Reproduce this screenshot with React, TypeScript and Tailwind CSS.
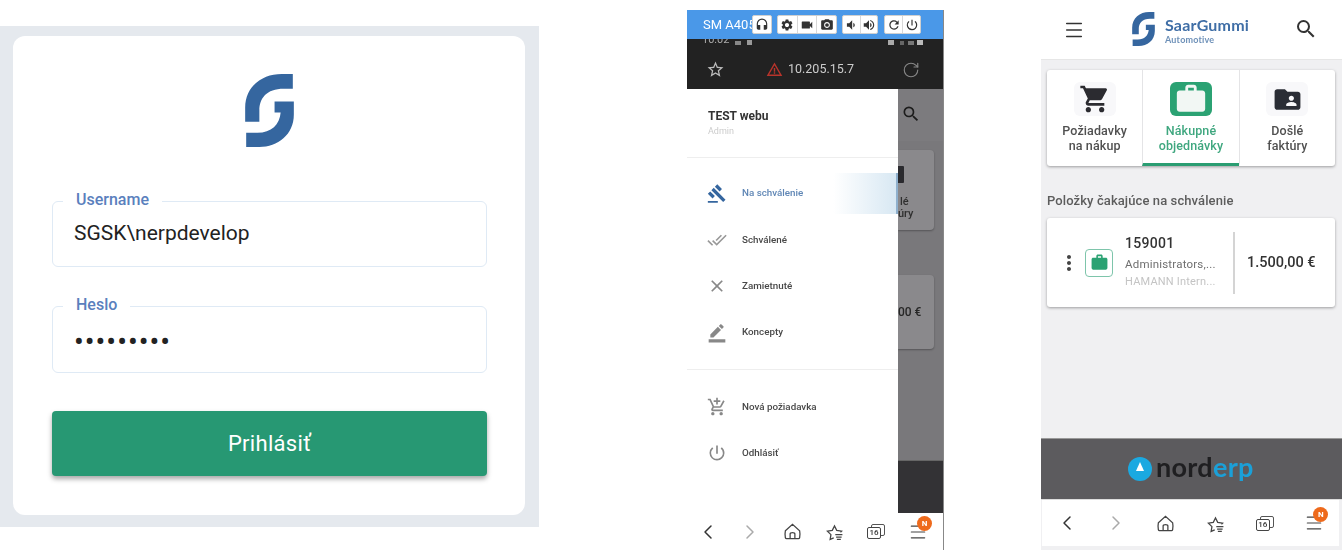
import type { ReactNode } from 'react'
import { clsx } from 'clsx'
import {
  MdAddShoppingCart,
  MdBorderColor,
  MdClose,
  MdDoneAll,
  MdFolderShared,
  MdGavel,
  MdHeadset,
  MdMoreVert,
  MdPhotoCamera,
  MdPowerSettingsNew,
  MdRefresh,
  MdSearch,
  MdSettings,
  MdShoppingCart,
  MdStarBorder,
  MdVideocam,
  MdVolumeDown,
  MdVolumeUp,
  MdWarningAmber,
  MdWork,
} from 'react-icons/md'
import { ChevronLeft, ChevronRight, Menu, RotateCw } from 'lucide-react'

function SaarLogo({ className }: { className: string }) {
  return (
    <svg viewBox="0 0 48 72" className={className} fill="#35669f">
      <path d="M47 0V14.5H38C21 14.5 14 24 14 36V47H0V33C0 13 16 0 36 0Z" />
      <path d="M29 27H48V40C48 60 32 72 14 72H1V58H12C26 58 34 50 35 38H29Z" />
    </svg>
  )
}

function Field({ label, gapWidth, children, className }: { label: string; gapWidth: string; children: ReactNode; className: string }) {
  return (
    <div className={clsx('relative ml-[39px] mr-[38px] border-[1.5px] border-[#dfeaf5] rounded-md flex items-center pl-[21px] text-[#222]', className)}>
      <span className={clsx('absolute left-[10px] -top-[12px] h-5 bg-white pl-[13px] text-[16px] font-medium leading-5 text-[#5a80bd]', gapWidth)}>{label}</span>
      {children}
    </div>
  )
}

function LoginCard() {
  return (
    <section className="mt-[26px] w-[539px] h-[501px] shrink-0 bg-[#e5e9ee] pt-[10px] pl-[13px]">
      <div className="w-[512px] h-[479px] bg-white rounded-xl flex flex-col">
        <SaarLogo className="w-[49px] h-[73px] mt-[38px] ml-[232px]" />
        <Field label="Username" gapWidth="w-[99px]" className="mt-[54px] h-[66px] text-[21px]">
          SGSK\nerpdevelop
        </Field>
        <Field label="Heslo" gapWidth="w-[67px]" className="mt-[39px] h-[67px]">
          <span className="text-[29px] leading-[28px] tracking-[1px] pt-[4px]">•••••••••</span>
        </Field>
        <button className="ml-[39px] mr-[38px] mt-[38px] h-[65px] rounded-sm bg-[#279873] text-white text-[22px] tracking-[0.3px] shadow-[0_3px_5px_rgba(0,0,0,0.35)]">
          Prihlásiť
        </button>
      </div>
    </section>
  )
}

function ToolGroup({ items, className }: { items: ReactNode[]; className: string }) {
  return (
    <div className={clsx('flex h-[19px] bg-white rounded-[2px] border border-[#d0d0d0]', className)}>
      {items.map((item, i) => (
        <span key={i} className="flex-1 flex items-center justify-center border-l border-[#d8d8d8] first:border-l-0 text-[#333] text-[14px]">
          {item}
        </span>
      ))}
    </div>
  )
}

function HomeIcon() {
  return (
    <svg viewBox="0 0 24 24" className="w-[19px] h-[19px]" fill="none" stroke="#444" strokeWidth="1.6">
      <path d="M3 11 12 3l9 8c.6 3 .6 6 0 9a1.500 1.500 0 0 1-1.500 1h-15A1.500 1.500 0 0 1 3 20c-.6-3-.6-6 0-9Z" />
      <path d="M9 21v-6c0-2 6-2 6 0v6" />
    </svg>
  )
}

function StarListIcon() {
  return (
    <svg viewBox="0 0 24 24" className="w-[19px] h-[19px]" fill="none" stroke="#444" strokeWidth="1.6">
      <path d="M11 20 6.500 22l1-6L3 11.500l6.200-1L12 5l2.800 5.500 6.200 1-1.500 1.500" />
      <path d="M13 16h9M14 19h7M15 22h5" />
    </svg>
  )
}

function TabsIcon() {
  return (
    <div className="relative w-[18px] h-[15px]">
      <span className="absolute right-0 top-0 w-[14px] h-[12px] border-[1.5px] border-[#555] rounded-[2px]" />
      <span className="absolute left-0 bottom-0 w-[14px] h-[12px] border-[1.5px] border-[#444] rounded-[2px] bg-white text-[8px] leading-[9px] text-center font-medium text-[#333]">16</span>
    </div>
  )
}

function BrowserNav({ className }: { className: string }) {
  return (
    <nav className={clsx('grid grid-cols-6 items-center justify-items-center bg-white', className)}>
      <ChevronLeft size={24} strokeWidth={1.5} className="text-[#333]" />
      <ChevronRight size={24} strokeWidth={1.5} className="text-[#aaa]" />
      <HomeIcon />
      <StarListIcon />
      <TabsIcon />
      <div className="relative">
        <Menu size={20} strokeWidth={1.4} className="block text-[#444]" />
        <span className="absolute -top-[6px] left-[9px] w-[15px] h-[15px] rounded-full bg-[#ee6a1c] text-white text-[8px] font-bold leading-[15px] text-center">N</span>
      </div>
    </nav>
  )
}

const DRAWER_ITEMS = [
  { label: 'Schválené', icon: <MdDoneAll size={20} className="text-[#999]" /> },
  { label: 'Zamietnuté', icon: <MdClose size={20} className="text-[#888]" /> },
  { label: 'Koncepty', icon: <MdBorderColor size={21} className="text-[#888]" /> },
]

function DrawerRow({ icon, label }: { icon: ReactNode; label: string }) {
  return (
    <div className="h-[46px] flex items-center">
      <span className="w-[20px] ml-[20px] mr-[15px] flex justify-center">{icon}</span>
      <span className="text-[9.8px] font-medium text-[#484848]">{label}</span>
    </div>
  )
}

function MiddlePhone() {
  return (
    <section className="ml-[148px] mt-[10px] w-[257px] h-[540px] shrink-0 flex flex-col border-r border-r-[#888] blur-[0.4px]">
      <div className="h-[29px] bg-[#4a98e8] flex items-center shrink-0 overflow-hidden">
        <span className="ml-[16px] w-[49px] whitespace-nowrap overflow-hidden text-white text-[13px]">SM A405</span>
        <ToolGroup className="w-[20px]" items={[<MdHeadset key="h" />]} />
        <ToolGroup className="w-[60px] ml-[5px]" items={[<MdSettings key="s" />, <MdVideocam key="v" />, <MdPhotoCamera key="p" />]} />
        <ToolGroup className="w-[36px] ml-[5px]" items={[<MdVolumeDown key="d" />, <MdVolumeUp key="u" />]} />
        <ToolGroup className="w-[37px] ml-[6px]" items={[<MdRefresh key="r" />, <MdPowerSettingsNew key="o" />]} />
      </div>

      <div className="h-[50px] bg-[#222] shrink-0 flex flex-col overflow-hidden">
        <div className="h-[6px] pl-[15px] flex items-end pr-[20px] overflow-hidden">
          <span className="text-[11px] leading-[10px] text-[#aaa]">10:02</span>
          <span className="ml-[6px] w-[6px] h-[4px] bg-[#888]" />
          <span className="ml-[6px] w-[5px] h-[5px] bg-[#999]" />
          <span className="ml-auto w-[6px] h-[5px] bg-[#aaa]" />
          <span className="ml-[6px] w-[4px] h-[4px] bg-[#666]" />
          <span className="ml-[4px] w-[6px] h-[4px] bg-[#777]" />
          <span className="ml-[3px] w-[6px] h-[5px] bg-[#bbb]" />
        </div>
        <div className="flex-1 flex items-center pt-[5px] text-[#ccc]">
          <MdStarBorder size={19} className="ml-[19px] text-[#bbb]" />
          <MdWarningAmber size={17} className="ml-[41px] text-[#b8342b]" />
          <span className="ml-[5px] text-[12.5px]">10.205.15.7</span>
          <RotateCw size={18} strokeWidth={1.5} className="ml-[48px] text-[#888]" />
        </div>
      </div>

      <div className="flex-1 flex min-h-0">
        <div className="w-[211px] bg-white shrink-0 flex flex-col">
          <div className="h-[69px] border-b border-[#eee] pl-[21px] pt-[20px]">
            <p className="text-[12px] font-bold leading-[14px] text-[#333]">TEST webu</p>
            <p className="text-[9px] leading-[10px] mt-[3px] text-[#ccc]">Admin</p>
          </div>
          <div className="mt-[15px] h-[41px] flex items-center bg-gradient-to-r from-white from-70% to-[#d8e8f3] border-r-2 border-[#8fb0cd]">
            <span className="w-[20px] ml-[20px] mr-[15px] flex justify-center"><MdGavel size={21} className="text-[#35669f]" /></span>
            <span className="text-[9.8px] font-medium text-[#5f86b5]">Na schválenie</span>
          </div>
          <div className="mt-[3px]">
            {DRAWER_ITEMS.map((item) => (
              <DrawerRow key={item.label} icon={item.icon} label={item.label} />
            ))}
          </div>
          <div className="mt-[14px] border-t border-[#eee] pt-[14px]">
            <DrawerRow icon={<MdAddShoppingCart size={20} className="text-[#888]" />} label="Nová požiadavka" />
            <DrawerRow icon={<MdPowerSettingsNew size={20} className="text-[#888]" />} label="Odhlásiť" />
          </div>
        </div>

        <div className="flex-1 flex flex-col overflow-hidden bg-[#79787b]">
          <div className="h-[52px] shrink-0 bg-[#7c7b7e] flex items-center pl-[3px] pb-[2px]">
            <MdSearch size={20} className="text-[#1c1c1c]" />
          </div>
          <div className="mt-[9px] w-[36px] h-[80px] shrink-0 rounded-r-sm bg-[#8a898c] shadow-[0_1px_2px_rgba(0,0,0,0.3)] flex flex-col">
            <span className="mt-[16px] w-[6px] h-[17px] bg-[#2a2a2e] rounded-r-[1px]" />
            <span className="mt-[13px] text-[11px] leading-[12px] text-[#2f2f2f] font-medium pl-[2px]">lé</span>
            <span className="text-[11px] leading-[12px] text-[#2f2f2f] font-medium">úry</span>
          </div>
          <div className="mt-[45px] w-[36px] h-[74px] shrink-0 rounded-r-sm bg-[#8a898c] shadow-[0_1px_2px_rgba(0,0,0,0.3)] flex items-center">
            <span className="text-[12px] font-medium text-[#262626]">00 €</span>
          </div>
          <div className="mt-auto h-[53px] shrink-0 bg-[#333235] border-t border-[#666]" />
        </div>
      </div>

      <BrowserNav className="h-[37px] shrink-0 w-[252px]" />
    </section>
  )
}

function TabTile({ icon, label, active }: { icon: ReactNode; label: [string, string]; active?: boolean }) {
  return (
    <div className={clsx('flex-1 flex flex-col items-center pt-[12px] border-l border-[#e4e4e6] first:border-l-0 border-b-[3px]', active ? 'border-b-[#2a9d72]' : 'border-b-transparent')}>
      <span className={clsx('w-[42px] h-[34px] rounded-md flex items-center justify-center', active ? 'bg-[#2ba273]' : 'bg-[#f8f8fa]')}>{icon}</span>
      <p className={clsx('mt-[8px] text-[12.5px] leading-[14.500px] font-medium tracking-[0.1px] text-center', active ? 'text-[#3fa77f]' : 'text-[#505050]')}>
        {label[0]}
        <br />
        {label[1]}
      </p>
    </div>
  )
}

function RightPhone() {
  return (
    <section className="ml-[97px] w-[301px] h-[550px] shrink-0 flex flex-col bg-[#f0f0f2] blur-[0.4px]">
      <header className="h-[60px] shrink-0 bg-white border-b border-[#e6e6e6] flex items-start">
        <Menu size={22} strokeWidth={1.6} className="ml-[22px] mt-[19px] text-[#333]" />
        <SaarLogo className="w-[23px] h-[34px] ml-[47px] mt-[12px]" />
        <div className="ml-[10px] mt-[15px]">
          <p className="font-['Lato',sans-serif] text-[16px] leading-[20px] font-bold tracking-[0.2px] text-[#3f6ea6]">SaarGummi</p>
          <p className="font-['Lato',sans-serif] text-[9px] leading-[9px] font-bold tracking-[0.2px] text-[#6d90b8]">Automotive</p>
        </div>
        <MdSearch size={24} className="ml-[45px] mt-[17px] text-[#333]" />
      </header>

      <div className="mx-[6px] mt-[10px] h-[96px] w-[288px] shrink-0 bg-white rounded-[3px] shadow-[0_1px_3px_rgba(0,0,0,0.35)] flex overflow-hidden">
        <TabTile icon={<MdShoppingCart size={32} className="text-[#2b2b30]" />} label={['Požiadavky', 'na nákup']} />
        <TabTile active icon={<MdWork size={34} className="text-[#f2f7f4]" />} label={['Nákupné', 'objednávky']} />
        <TabTile icon={<MdFolderShared size={31} className="text-[#2a2d35]" />} label={['Došlé', 'faktúry']} />
      </div>

      <h2 className="ml-[6px] mt-[27px] h-[16px] text-[13px] leading-[16px] font-medium tracking-[0.1px] text-[#5c5c5c]">Položky čakajúce na schválenie</h2>

      <div className="mx-[6px] mt-[9px] h-[89px] w-[288px] shrink-0 bg-white rounded-[3px] shadow-[0_1px_3px_rgba(0,0,0,0.35)] flex items-center">
        <MdMoreVert size={24} className="ml-[10px] text-[#444]" />
        <span className="ml-[4px] w-[28px] h-[28px] border-[1.5px] border-[#7ec5ab] rounded-[4px] flex items-center justify-center">
          <MdWork size={19} className="text-[#2ba273]" />
        </span>
        <div className="ml-[12px] w-[108px] flex flex-col -mt-[3px]">
          <span className="text-[14px] leading-[18px] font-medium tracking-[0.3px] text-[#333]">159001</span>
          <span className="mt-[5px] text-[11.5px] leading-[14px] tracking-[0.2px] text-[#6f6f6f]">Administrators,...</span>
          <span className="mt-[4px] text-[11px] leading-[14px] tracking-[0.2px] text-[#c4c4c4]">HAMANN Intern...</span>
        </div>
        <span className="w-[2px] h-[62px] bg-[#d4d4d4]" />
        <span className="ml-[12px] text-[14.5px] font-medium text-[#333]">1.500,00 €</span>
      </div>

      <div className="mt-[131px] h-[62px] shrink-0 bg-[#5c5b5e] border-t border-[#999] border-b border-b-[#ddd] flex items-center pl-[87px]">
        <span className="relative w-[24px] h-[24px] rounded-full bg-[#1ba9e1] flex items-center justify-center">
          <span className="w-0 h-0 mb-[6px] border-l-[4px] border-r-[4px] border-b-[9px] border-l-transparent border-r-transparent border-b-white" />
        </span>
        <span className="ml-[4px] font-['Lato',sans-serif] text-[27px] leading-[28px] font-bold tracking-[0.3px] text-[#1f1f21] pb-[5px]">
          nord<span className="text-[#1ba0d8]">erp</span>
        </span>
      </div>

      <BrowserNav className="h-[46px] shrink-0 w-[297px] ml-px" />
    </section>
  )
}

export default function App() {
  return (
    <div className="w-[1342px] h-[550px] bg-white flex items-start overflow-hidden font-['Roboto',sans-serif]">
      <LoginCard />
      <MiddlePhone />
      <RightPhone />
    </div>
  )
}
